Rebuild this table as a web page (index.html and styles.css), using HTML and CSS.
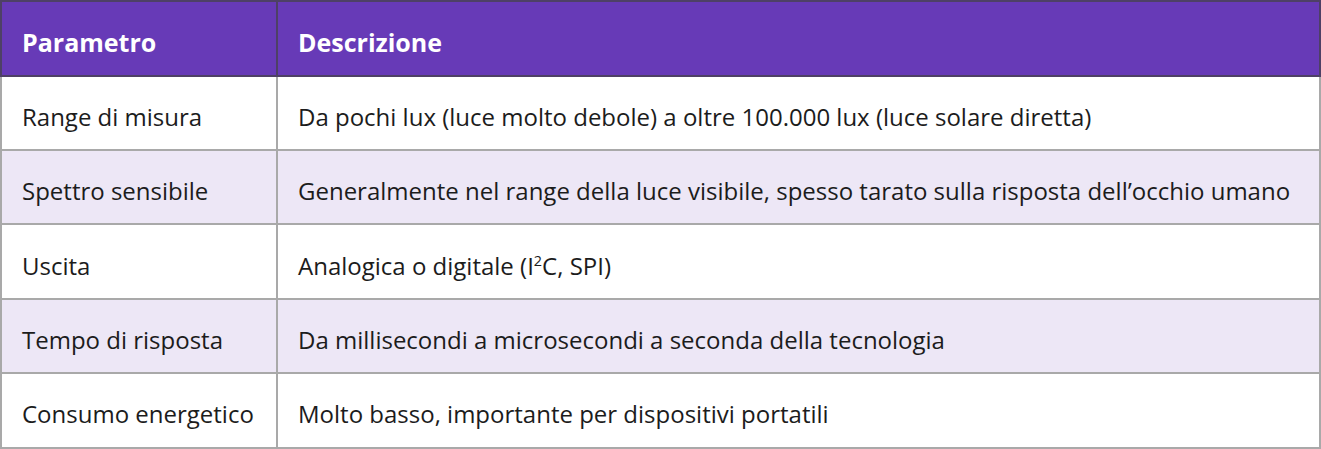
FILE: index.html
```html
<!DOCTYPE html>
<html lang="it">
<head>
<meta charset="utf-8">
<title>Parametri</title>
<link rel="stylesheet" href="styles.css">
</head>
<body>
<table class="spec">
  <thead>
    <tr><th class="c1">Parametro</th><th>Descrizione</th></tr>
  </thead>
  <tbody>
    <tr><td>Range di misura</td><td>Da pochi lux (luce molto debole) a oltre 100.000 lux (luce solare diretta)</td></tr>
    <tr><td>Spettro sensibile</td><td>Generalmente nel range della luce visibile, spesso tarato sulla risposta dell’occhio umano</td></tr>
    <tr><td>Uscita</td><td>Analogica o digitale (I<sup>2</sup>C, SPI)</td></tr>
    <tr><td>Tempo di risposta</td><td>Da millisecondi a microsecondi a seconda della tecnologia</td></tr>
    <tr><td>Consumo energetico</td><td>Molto basso, importante per dispositivi portatili</td></tr>
  </tbody>
</table>
</body>
</html>
```
FILE: styles.css
```css
html, body { margin: 0; padding: 0; background: #ffffff; }
body { font-family: "Open Sans", "Noto Sans", sans-serif; color: #1c1c1c; }
.spec { width: 1321px; border-collapse: collapse; font-size: 24px; }
.spec th, .spec td { text-align: left; padding: 8px 20px 0; border: 2px solid #a9a9a9; line-height: 32px; white-space: nowrap; }
.spec th { background: #673ab7; color: #ffffff; font-weight: 700; height: 64.6px; border-color: #4e4066; font-size: 25px; }
.spec td { height: 64.4px; }
.spec .c1 { width: 234px; }
.spec tbody tr:nth-child(even) td { background: #ede7f6; }
.spec sup { font-size: 0.6em; line-height: 0; vertical-align: 0.62em; }
```
